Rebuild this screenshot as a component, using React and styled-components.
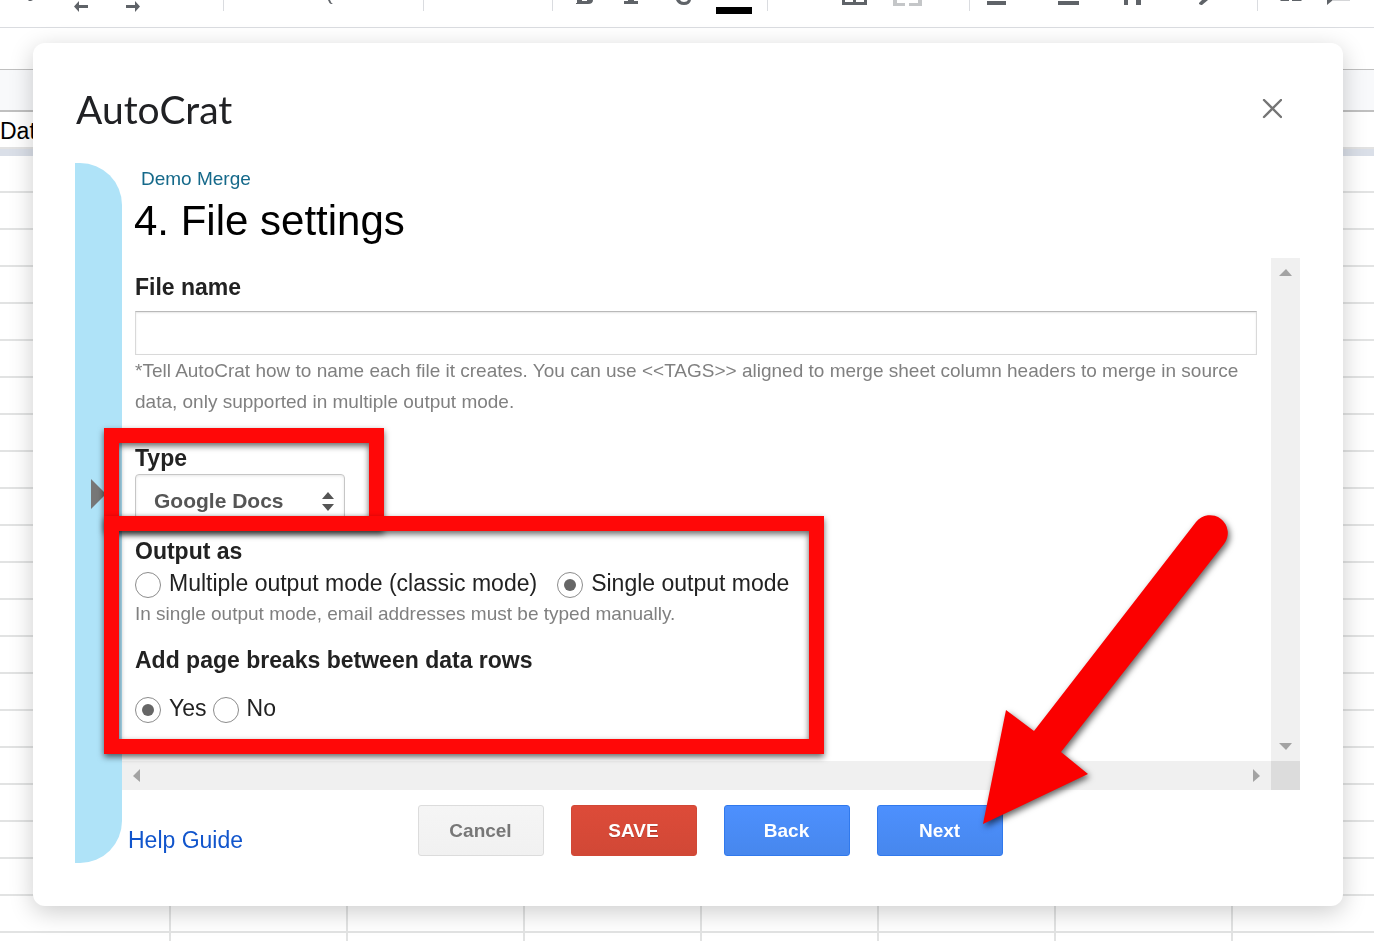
import { useState } from "react";
import styled, { createGlobalStyle } from "styled-components";

const tools = [
  { name: "Print", gap: 28, width: 8, body: <path d="M0 0h5l-2 1H1z" /> },
  { name: "Undo", gap: 38, width: 14, body: <path d="M0 6.500L5 1v4h9v3H5v4z" /> },
  { name: "Redo", gap: 38, width: 14, body: <path d="M14 6.500L9 1v4H0v3h9v4z" /> },
  { divider: true, gap: 83 },
  { name: "Zoom", gap: 104, width: 6, body: <path d="M0 0h2q1 3 3 4h-2q-2-1-3-4z" /> },
  { divider: true, gap: 89 },
  { divider: true, gap: 128 },
  {
    name: "Bold",
    gap: 23,
    width: 18,
    body: <path d="M0 3h1V0h5v1h5V0h6q0 4-5 4H0z" />,
  },
  { name: "Italic", gap: 30, width: 14, body: <path d="M4 0h6v1h4v3H0V1h4z" /> },
  {
    name: "Strikethrough",
    gap: 38,
    width: 15,
    body: <path d="M0 0h4q1 2 4 2t4-2h3q-1 5-7 5T0 0z" />,
  },
  { name: "Text color", gap: 25, width: 36, body: <path fill="#000" d="M0 7h36v7H0z" /> },
  { divider: true, gap: 15 },
  {
    name: "Borders",
    gap: 74,
    width: 25,
    body: <path d="M0 0h3v2h8V0h3v2h8V0h3v5H0z" />,
  },
  {
    name: "Merge cells",
    gap: 26,
    width: 29,
    body: <path fill="#c4c6c8" d="M0 0h4v3h8v3H0zM16 3h9V0h4v6H16z" />,
  },
  { divider: true, gap: 47 },
  { name: "Horizontal align", gap: 17, width: 19, body: <path d="M0 1h19v4H0z" /> },
  { name: "Vertical align", gap: 52, width: 21, body: <path d="M0 1h21v4H0z" /> },
  { name: "Text wrapping", gap: 45, width: 17, body: <path d="M0 0h4v5H0zM12 0h5v5h-5z" /> },
  { name: "Text rotation", gap: 58, width: 9, body: <path d="M3 0h6L3 5H2L0 4V3z" /> },
  { divider: true, gap: 49 },
  { name: "Insert link", gap: 21, width: 24, body: <path d="M1 0h9v1H2zM13 0h10l-1 1h-9z" /> },
  {
    name: "Insert comment",
    gap: 24,
    width: 24,
    body: (
      <>
        <path d="M0 0h6L0 5z" />
        <path fill="#d5d6d8" d="M6 0h17v1H5z" />
      </>
    ),
  },
];

const sheetRows = Array.from({ length: 22 });
const sheetColumns = Array.from({ length: 14 });

const arrowPaths = {
  up: "M0 7l7-7 6 7z",
  down: "M0 0h13l-6 7z",
  left: "M7 0v13L0 7z",
  right: "M0 0v13l7-6z",
};

const ScrollArrow = ({ direction }) => {
  const vertical = direction === "up" || direction === "down";

  return (
    <ScrollButton type="button" aria-label={`Scroll ${direction}`}>
      <svg width={vertical ? 13 : 7} height={vertical ? 7 : 13} fill="#a3a3a3">
        <path d={arrowPaths[direction]} />
      </svg>
    </ScrollButton>
  );
};

const Toolbar = () => (
  <ToolbarContainer>
    {tools.map((tool, index) =>
      tool.divider ? (
        <ToolDivider key={index} $gap={tool.gap} />
      ) : (
        <ToolButton key={index} type="button" aria-label={tool.name} $gap={tool.gap}>
          <svg width={tool.width} height="16" fill="#5f6368">
            {tool.body}
          </svg>
        </ToolButton>
      )
    )}
  </ToolbarContainer>
);

const Sheet = () => (
  <SheetTable>
    <colgroup>
      {sheetColumns.map((_, index) => (
        <SheetColumn key={index} $first={index === 0} />
      ))}
    </colgroup>
    <thead>
      <tr>
        <SheetHead colSpan={14} />
      </tr>
    </thead>
    <tbody>
      <tr>
        <FrozenCell colSpan={14}>Date</FrozenCell>
      </tr>
      {sheetRows.map((_, row) => (
        <tr key={row}>
          {sheetColumns.map((_, column) => (
            <SheetCell key={column} />
          ))}
        </tr>
      ))}
    </tbody>
  </SheetTable>
);

const App = () => {
  const [fileName, setFileName] = useState("");
  const [type, setType] = useState("docs");
  const [output, setOutput] = useState("single");
  const [pageBreaks, setPageBreaks] = useState("yes");

  return (
    <>
      <GlobalStyle />
      <Page>
        <Toolbar />
        <FormulaBar />
        <Sheet />
      </Page>
      <Overlay>
        <Dialog role="dialog" aria-labelledby="dialog-title">
          <DialogHeader>
            <DialogTitle id="dialog-title">AutoCrat</DialogTitle>
            <CloseButton type="button" aria-label="Close">
              <svg width="20" height="20" fill="none" stroke="#757575" strokeWidth="2.400">
                <path strokeLinecap="round" d="M2 1l17 17M19 1L2 18" />
              </svg>
            </CloseButton>
          </DialogHeader>
          <DialogBody>
            <StepsBar type="button" aria-label="Show steps">
              <svg width="15" height="30" fill="#777">
                <path d="M0 0l15 15L0 30z" />
              </svg>
            </StepsBar>
            <Content>
              <JobName>Demo Merge</JobName>
              <StepTitle>4. File settings</StepTitle>
              <ScrollPane>
                <Form>
                  <FieldLabel htmlFor="file-name">File name</FieldLabel>
                  <TextInput
                    id="file-name"
                    type="text"
                    value={fileName}
                    onChange={(e) => setFileName(e.target.value)}
                  />
                  <Hint>
                    *Tell AutoCrat how to name each file it creates. You can use &lt;&lt;TAGS&gt;&gt;
                    aligned to merge sheet column headers to merge in source data, only supported
                    in multiple output mode.
                  </Hint>

                  <TypeField>
                    <FieldLabel htmlFor="file-type">Type</FieldLabel>
                    <SelectBox>
                      <Select
                        id="file-type"
                        value={type}
                        onChange={(e) => setType(e.target.value)}
                      >
                        <option value="docs">Google Docs</option>
                        <option value="pdf">PDF</option>
                      </Select>
                      <SelectArrows width="12" height="19" fill="#555">
                        <path d="M6 0l6 7H0zM0 12h12l-6 7z" />
                      </SelectArrows>
                    </SelectBox>
                  </TypeField>

                  <OutputField>
                    <Legend>Output as</Legend>
                    <RadioRow $gap={20}>
                      <RadioLabel>
                        <Radio
                          type="radio"
                          name="output"
                          checked={output === "multiple"}
                          onChange={() => setOutput("multiple")}
                        />
                        Multiple output mode (classic mode)
                      </RadioLabel>
                      <RadioLabel>
                        <Radio
                          type="radio"
                          name="output"
                          checked={output === "single"}
                          onChange={() => setOutput("single")}
                        />
                        Single output mode
                      </RadioLabel>
                    </RadioRow>
                    <Hint>In single output mode, email addresses must be typed manually.</Hint>
                  </OutputField>

                  <BreaksField>
                    <Legend>Add page breaks between data rows</Legend>
                    <RadioRow $gap={6}>
                      <RadioLabel>
                        <Radio
                          type="radio"
                          name="breaks"
                          checked={pageBreaks === "yes"}
                          onChange={() => setPageBreaks("yes")}
                        />
                        Yes
                      </RadioLabel>
                      <RadioLabel>
                        <Radio
                          type="radio"
                          name="breaks"
                          checked={pageBreaks === "no"}
                          onChange={() => setPageBreaks("no")}
                        />
                        No
                      </RadioLabel>
                    </RadioRow>
                  </BreaksField>

                  <Highlight $top={170} $width={280} $height={103} />
                  <Highlight $top={258} $width={720} $height={238} />
                </Form>
                <VerticalBar>
                  <ScrollArrow direction="up" />
                  <ScrollArrow direction="down" />
                </VerticalBar>
                <HorizontalBar>
                  <ScrollArrow direction="left" />
                  <ScrollArrow direction="right" />
                </HorizontalBar>
                <ScrollCorner />
              </ScrollPane>
              <Footer>
                <HelpLink href="#help">Help Guide</HelpLink>
                <ButtonRow>
                  <Button type="button">Cancel</Button>
                  <Button type="button" $variant="danger">
                    SAVE
                  </Button>
                  <Button type="button" $variant="primary">
                    Back
                  </Button>
                  <NextWrapper>
                    <Button type="button" $variant="primary">
                      Next
                    </Button>
                    <PointerArrow width="270" height="335">
                      <path
                        fill="#fb0000"
                        d="M13 319L36 205 64 226 226 17A17.700 17.700 0 0 1 254 39L91 247 118 269z"
                      />
                    </PointerArrow>
                  </NextWrapper>
                </ButtonRow>
              </Footer>
            </Content>
          </DialogBody>
        </Dialog>
      </Overlay>
    </>
  );
};

export default App;

const GlobalStyle = createGlobalStyle`
  * {
    box-sizing: border-box;
  }

  body {
    margin: 0;
    overflow: hidden;
    background: #fff;
    font-family: "Liberation Sans", Arial, sans-serif;
    color: #222;
  }

  button, input, select {
    font-family: inherit;
  }
`;

const Page = styled.main`
  height: 100vh;
  overflow: hidden;
`;

const ToolbarContainer = styled.div`
  display: flex;
  align-items: flex-start;
  height: 28px;
  overflow: hidden;
  border-bottom: 1px solid #dadce0;
`;

const ToolButton = styled.button`
  display: flex;
  flex-shrink: 0;
  margin: 0 0 0 ${({ $gap }) => $gap}px;
  padding: 0;
  border: none;
  background: none;
`;

const ToolDivider = styled.span`
  flex-shrink: 0;
  width: 1px;
  height: 11px;
  margin-left: ${({ $gap }) => $gap}px;
  background: #dadce0;
`;

const FormulaBar = styled.div`
  height: 41px;
`;

const SheetTable = styled.table`
  table-layout: fixed;
  width: 2472px;
  border-collapse: separate;
  border-spacing: 0;
`;

const SheetColumn = styled.col`
  width: ${({ $first }) => ($first ? 171 : 177)}px;
`;

const SheetHead = styled.th`
  height: 43px;
  padding: 0;
  border-top: 1px solid #c0c0c0;
  border-bottom: 2px solid #c0c0c0;
  background: #f8f9fb;
`;

const FrozenCell = styled.td`
  height: 44px;
  padding: 2px 0 0;
  border-bottom: 7px solid #dadfe8;
  box-shadow: inset 0 -2px #e2e2e2;
  font-size: 23px;
  line-height: 35px;
  color: #000;
`;

const SheetCell = styled.td`
  height: 37px;
  padding: 0;
  border-right: 2px solid #e2e3e3;
  border-bottom: 2px solid #e2e3e3;
`;

const Overlay = styled.div`
  position: fixed;
  inset: 0;
  padding: 43px 31px 35px 33px;
`;

const Dialog = styled.section`
  padding: 43px 43px 43px 42px;
  border-radius: 12px;
  background: #fff;
  box-shadow: 0 6px 24px rgba(0, 0, 0, 0.2);
`;

const DialogHeader = styled.header`
  display: flex;
  justify-content: space-between;
  align-items: center;
  margin-bottom: 31px;
`;

const DialogTitle = styled.h1`
  margin: 0;
  padding-left: 1px;
  font-family: Lato, sans-serif;
  font-size: 39px;
  font-weight: 400;
  line-height: 46px;
  color: #202124;
`;

const CloseButton = styled.button`
  display: flex;
  margin: 0 12px 0 0;
  padding: 6px;
  border: none;
  background: none;
`;

const DialogBody = styled.div`
  display: flex;
`;

const StepsBar = styled.button`
  display: flex;
  align-items: center;
  flex-shrink: 0;
  width: 47px;
  padding: 0 0 38px 16px;
  border: none;
  border-radius: 0 42px 42px 0;
  background: #afe3f8;
`;

const Content = styled.div`
  flex: 1;
  min-width: 0;
`;

const JobName = styled.div`
  padding-left: 19px;
  font-size: 19px;
  line-height: 31px;
  color: #15698a;
`;

const StepTitle = styled.h2`
  margin: 0 0 10px;
  padding-left: 12px;
  font-size: 42px;
  font-weight: 400;
  line-height: 54px;
  color: #000;
`;

const ScrollPane = styled.div`
  display: grid;
  grid-template-columns: 1fr 29px;
  grid-template-rows: auto 29px;
`;

const Form = styled.form`
  position: relative;
  padding: 15px 14px 38px 13px;
`;

const FieldLabel = styled.label`
  display: block;
  font-size: 23px;
  font-weight: 700;
  line-height: 28px;
`;

const TextInput = styled.input`
  display: block;
  width: 100%;
  height: 44px;
  margin-top: 10px;
  padding: 0 12px;
  border: 1px solid #d9d9d9;
  border-top-color: #b9b9b9;
  font-size: 20px;
  box-shadow: inset 0 1px 2px rgba(0, 0, 0, 0.1);
`;

const Hint = styled.p`
  margin: 0;
  font-size: 19px;
  line-height: 31px;
  color: #808080;
`;

const TypeField = styled.div`
  margin-top: 27px;
`;

const SelectBox = styled.div`
  position: relative;
  width: 210px;
  margin-top: 2px;
`;

const Select = styled.select`
  appearance: none;
  display: block;
  width: 100%;
  height: 53px;
  padding: 0 40px 0 18px;
  border: 1px solid #c6c6c6;
  border-radius: 4px;
  background: #fff;
  box-shadow: inset 0 1px 3px rgba(0, 0, 0, 0.1);
  font-size: 21px;
  font-weight: 700;
  color: #555;
`;

const SelectArrows = styled.svg`
  position: absolute;
  top: 18px;
  right: 11px;
  pointer-events: none;
`;

const OutputField = styled.fieldset`
  margin: 10px 0 0;
  padding: 0;
  border: none;
`;

const BreaksField = styled(OutputField)`
  margin-top: 17px;

  & > div {
    margin-top: 23px;
  }
`;

const Legend = styled.legend`
  padding: 0;
  font-size: 23px;
  font-weight: 700;
  line-height: 28px;
`;

const RadioRow = styled.div`
  display: flex;
  gap: ${({ $gap }) => $gap}px;
  margin-top: 7px;
`;

const RadioLabel = styled.label`
  display: flex;
  align-items: flex-start;
  gap: 8px;
  font-size: 23px;
  line-height: 22px;
`;

const Radio = styled.input`
  appearance: none;
  display: grid;
  place-content: center;
  flex-shrink: 0;
  width: 26px;
  height: 26px;
  margin: 0;
  border: 1px solid #8c8c8c;
  border-radius: 50%;
  background: #fff;

  &:checked::before {
    content: "";
    width: 12px;
    height: 12px;
    border-radius: 50%;
    background: #666;
  }
`;

const Highlight = styled.div`
  position: absolute;
  left: -18px;
  top: ${({ $top }) => $top}px;
  width: ${({ $width }) => $width}px;
  height: ${({ $height }) => $height}px;
  border: 15px solid #ff0808;
  filter: drop-shadow(0 3px 3px rgba(0, 0, 0, 0.6));
  pointer-events: none;
`;

const VerticalBar = styled.div`
  display: flex;
  flex-direction: column;
  justify-content: space-between;
  background: #f0f0f0;
`;

const HorizontalBar = styled.div`
  display: flex;
  justify-content: space-between;
  background: #f0f0f0;
`;

const ScrollCorner = styled.div`
  background: #dcdcdc;
`;

const ScrollButton = styled.button`
  display: flex;
  justify-content: center;
  align-items: center;
  width: 29px;
  height: 29px;
  padding: 0;
  border: none;
  background: none;
`;

const Footer = styled.footer`
  display: grid;
  grid-template-columns: 1fr auto 1fr;
  align-items: end;
  padding: 15px 2px 7px 0;
`;

const HelpLink = styled.a`
  padding-left: 6px;
  font-size: 23px;
  line-height: 32px;
  color: #1155cc;
  text-decoration: none;
`;

const ButtonRow = styled.div`
  display: flex;
  gap: 27px;
`;

const buttonStyles = {
  default: { color: "#777", border: "#dcdcdc", from: "#f5f5f5", to: "#f1f1f1" },
  danger: { color: "#fff", border: "#d14836", from: "#dd4b39", to: "#d14836" },
  primary: { color: "#fff", border: "#3079ed", from: "#4d90fe", to: "#4787ed" },
};

const Button = styled.button`
  width: 126px;
  height: 51px;
  padding: 0;
  border: 1px solid ${({ $variant = "default" }) => buttonStyles[$variant].border};
  border-radius: 3px;
  background: linear-gradient(
    ${({ $variant = "default" }) => `${buttonStyles[$variant].from}, ${buttonStyles[$variant].to}`}
  );
  font-size: 19px;
  font-weight: 700;
  color: ${({ $variant = "default" }) => buttonStyles[$variant].color};
  text-shadow: ${({ $variant }) => ($variant === "danger" ? "0 1px rgba(0, 0, 0, 0.2)" : "none")};
`;

const NextWrapper = styled.div`
  position: relative;
`;

const PointerArrow = styled.svg`
  position: absolute;
  left: 93px;
  top: -300px;
  filter: drop-shadow(2px 3px 3px rgba(0, 0, 0, 0.6));
  pointer-events: none;
`;
